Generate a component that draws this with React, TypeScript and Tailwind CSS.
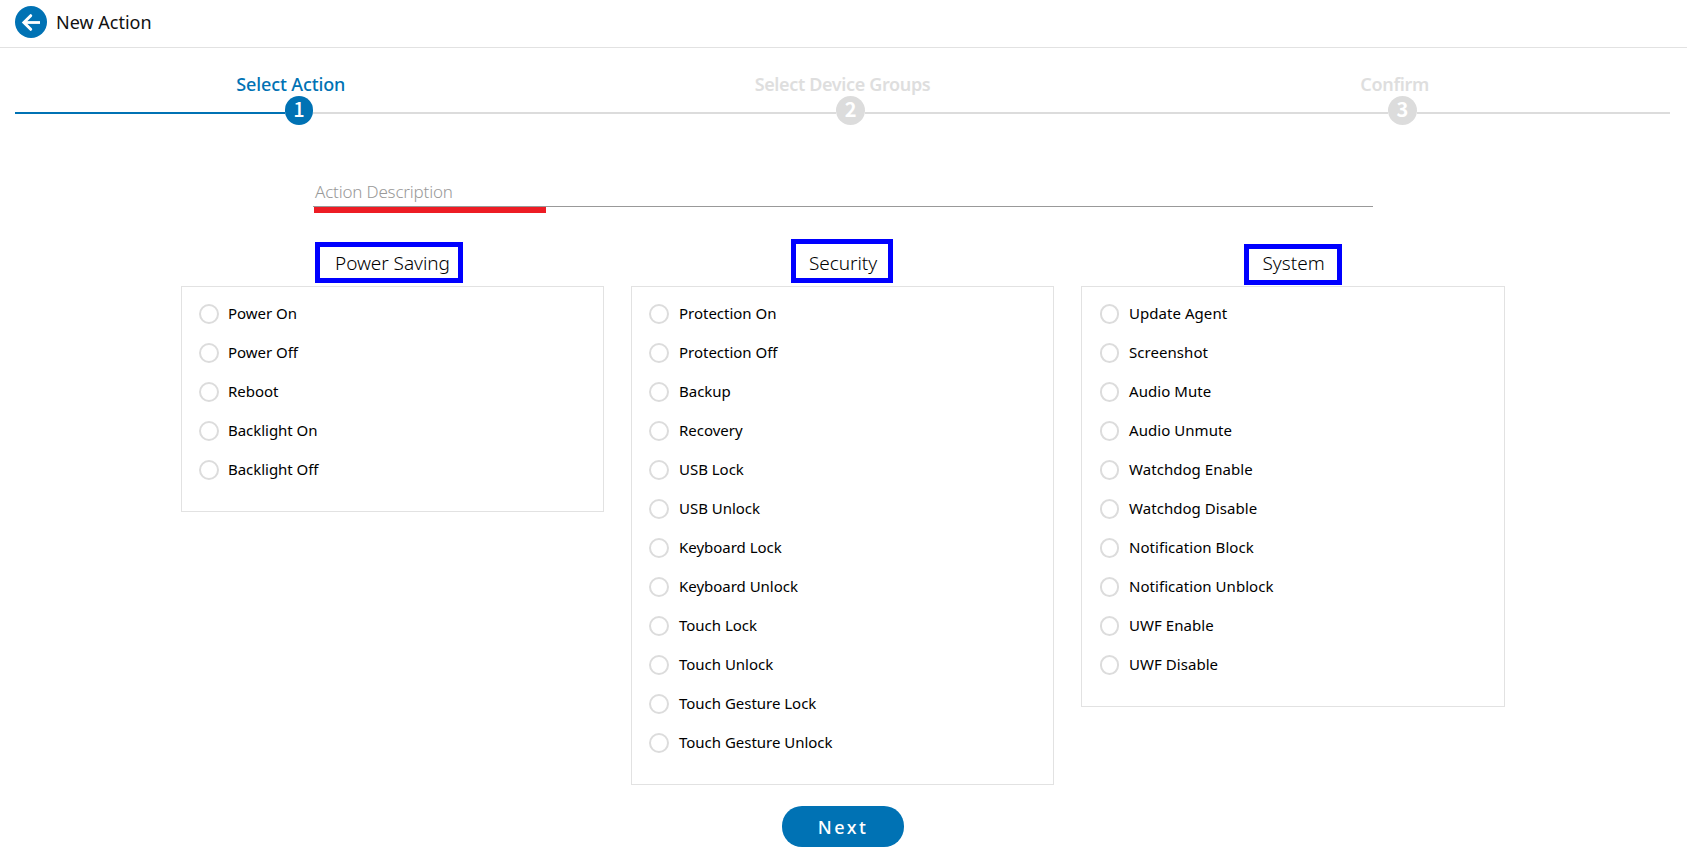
type Step = { label: string; number: number; active?: boolean; labelClass: string; lineClass: string };

const steps: Step[] = [
  {
    label: "Select Action",
    number: 1,
    active: true,
    labelClass: "font-medium tracking-[-0.12px] text-[#0072b4]",
    lineClass: "w-[270px] bg-[#0072b4]",
  },
  {
    label: "Select Device Groups",
    number: 2,
    labelClass: "font-semibold tracking-[-0.36px] text-[#dedede]",
    lineClass: "w-[269.4px] bg-[#dcdcdc]",
  },
  {
    label: "Confirm",
    number: 3,
    labelClass: "pl-px font-semibold tracking-[-0.3px] text-[#dedede]",
    lineClass: "w-[269.7px] bg-[#dcdcdc]",
  },
];

type Group = {
  title: string;
  titleClass: string;
  columnClass: string;
  radioClass: string;
  textClass: string;
  actions: string[];
};

const groups: Group[] = [
  {
    title: "Power Saving",
    titleClass: "ml-[134px] mt-[3px] h-[41px] w-[148px] pl-[15px] tracking-[-0.05px]",
    columnClass: "w-[423px]",
    radioClass: "w-5 mr-[9px]",
    textClass: "tracking-[-0.04px]",
    actions: ["Power On", "Power Off", "Reboot", "Backlight On", "Backlight Off"],
  },
  {
    title: "Security",
    titleClass: "ml-[160px] h-[44px] w-[102px] pl-[13px] pt-[3px] tracking-[-0.05px]",
    columnClass: "w-[423px]",
    radioClass: "w-5 mr-[10px]",
    textClass: "tracking-[-0.02px]",
    actions: [
      "Protection On",
      "Protection Off",
      "Backup",
      "Recovery",
      "USB Lock",
      "USB Unlock",
      "Keyboard Lock",
      "Keyboard Unlock",
      "Touch Lock",
      "Touch Unlock",
      "Touch Gesture Lock",
      "Touch Gesture Unlock",
    ],
  },
  {
    title: "System",
    titleClass: "ml-[163px] mt-[5px] h-[41px] w-[98px] pl-[13.5px] pb-[4px]",
    columnClass: "w-[424px]",
    radioClass: "ml-px w-[19px] mr-[10px]",
    textClass: "tracking-[0.05px]",
    actions: [
      "Update Agent",
      "Screenshot",
      "Audio Mute",
      "Audio Unmute",
      "Watchdog Enable",
      "Watchdog Disable",
      "Notification Block",
      "Notification Unblock",
      "UWF Enable",
      "UWF Disable",
    ],
  },
];

function Header() {
  return (
    <header className="flex h-12 items-start gap-[9px] border-b border-[#e2e2e2] pl-[15px] pt-1.5">
      <button className="h-8 w-8 shrink-0 rounded-full bg-[#0072b4]" aria-label="Back">
        <svg viewBox="0 0 32 32" className="h-8 w-8" fill="none" stroke="#fff" strokeWidth="3">
          <path d="M15.7 9.7 8.9 16.5 15.7 23.3" strokeLinecap="round" strokeLinejoin="miter" />
          <path d="M9.5 16.5H25" strokeWidth="2.8" />
        </svg>
      </button>
      <h1 className="text-[18px] leading-8 text-[#111]">New Action</h1>
    </header>
  );
}

function Stepper() {
  return (
    <nav className="ml-[15px] grid w-[1655px] grid-cols-3 pt-6">
      {steps.map((s) => (
        <div key={s.number}>
          <div className={`text-center text-[18px] leading-6 ${s.labelClass}`}>{s.label}</div>
          <div className="flex items-center">
            <div className={`mt-[5px] h-0.5 ${s.lineClass}`} />
            <div
              className={
                s.active
                  ? "flex h-[29px] w-[28px] items-center justify-center rounded-full bg-[#0072b4] pb-[3px] font-['Noto_Sans_CJK_TC',sans-serif] text-[20px] font-medium leading-5 text-white"
                  : "flex h-[29px] w-[29px] items-center justify-center rounded-full bg-[#dcdcdc] pb-[3px] font-['Noto_Sans_CJK_TC',sans-serif] text-[20px] font-bold leading-5 text-white"
              }
            >
              {s.number}
            </div>
            <div className="mt-[5px] h-0.5 flex-1 bg-[#dcdcdc]" />
          </div>
        </div>
      ))}
    </nav>
  );
}

function DescriptionField() {
  return (
    <div className="ml-[313px] mt-[55px] w-[1060px]">
      <div className="h-[27px] border-b border-[#999] pl-[2px] text-[17px] font-light leading-6 tracking-[-0.18px] text-[#999]">
        Action Description
      </div>
      <div className="ml-px h-1.5 w-[232px] bg-[#ed1c24]" />
    </div>
  );
}

function ActionGroup({ group }: { group: Group }) {
  return (
    <section className={group.columnClass}>
      <div className="flex h-[47px] items-start">
        <h2
          className={`flex items-center border-[5px] border-[#0000ff] text-[19px] font-light leading-6 text-black ${group.titleClass}`}
        >
          {group.title}
        </h2>
      </div>
      <ul className="flex flex-col gap-[19px] border border-[#e2e2e2] pb-[31px] pl-[17px] pt-[17px]">
        {group.actions.map((a) => (
          <li key={a} className="flex h-5 items-center">
            <span className={`h-5 shrink-0 rounded-full border-2 border-[#dcdcdc] ${group.radioClass}`} />
            <span className={`pb-px text-[15px] leading-[19px] text-black ${group.textClass}`}>{a}</span>
          </li>
        ))}
      </ul>
    </section>
  );
}

export default function App() {
  return (
    <div className="h-[854px] w-[1687px] overflow-hidden bg-white font-['Noto_Sans','Open_Sans',sans-serif]">
      <Header />
      <Stepper />
      <DescriptionField />
      <main className="ml-[181px] mt-[26px] flex h-[546px] items-start gap-[27px]">
        {groups.map((g) => (
          <ActionGroup key={g.title} group={g} />
        ))}
      </main>
      <button className="ml-[782px] mt-[21px] block h-[41px] w-[122px] rounded-[20px] bg-[#0072b4] pt-[1px] text-center text-[18px] font-medium leading-none tracking-[2.5px] text-white">
        Next
      </button>
    </div>
  );
}
